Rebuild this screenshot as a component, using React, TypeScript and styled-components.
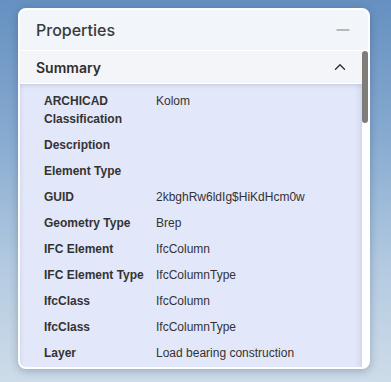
import React, { useState } from 'react';
import styled, { createGlobalStyle } from 'styled-components';

const GlobalStyle = createGlobalStyle`
  html, body {
    margin: 0;
    padding: 0;
    height: 100%;
  }
  body {
    background: linear-gradient(to bottom, #6590c0 0%, #86aad0 35%, #b3cae0 70%, #cedce9 100%);
    font-family: "Liberation Sans", Arial, sans-serif;
  }
`;

const Page = styled.div`
  padding: 8px 21px 13px 18px;
`;

const Panel = styled.div`
  width: 352px;
  height: 361px;
  box-sizing: border-box;
  display: flex;
  flex-direction: column;
  border: 2px solid #ffffff;
  border-radius: 8px;
  background: #ffffff;
  box-shadow: 0 2px 8px rgba(20, 40, 80, 0.28);
  overflow: hidden;
`;

const PanelHeader = styled.div`
  height: 40px;
  flex-shrink: 0;
  display: flex;
  align-items: center;
  justify-content: space-between;
  padding: 0 18px 0 16px;
  background: #f2f5f9;
  border-bottom: 1px solid #ffffff;
  border-radius: 6px 6px 0 0;
`;

const PanelTitle = styled.span`
  font-family: Inter, "Noto Sans", sans-serif;
  font-size: 16px;
  font-weight: 500;
  color: #3a3a3a;
`;

const IconButton = styled.button`
  border: none;
  background: transparent;
  padding: 0;
  display: flex;
  align-items: center;
  justify-content: center;
  cursor: pointer;
`;

const ScrollArea = styled.div`
  flex: 1;
  min-height: 0;
  display: flex;
`;

const ScrollContent = styled.div`
  flex: 1;
  min-width: 0;
  overflow: hidden;
`;

const ScrollTrack = styled.div`
  width: 6px;
  flex-shrink: 0;
  background: #ffffff;
`;

const ScrollThumb = styled.div`
  width: 6px;
  border-radius: 3px;
  background: #7f7d7a;
`;

const SectionHeader = styled.div`
  height: 32px;
  display: flex;
  align-items: center;
  justify-content: space-between;
  padding: 0 16px 0 16px;
  background: #f3f5f8;
  border-bottom: 1px solid #ffffff;
  cursor: pointer;
`;

const SectionTitle = styled.span`
  font-family: Inter, "Noto Sans", sans-serif;
  font-size: 14px;
  font-weight: 600;
  color: #2e2e2e;
`;

const SectionBody = styled.div`
  padding: 4px 0 6px;
  min-height: 100%;
  background: #e3e7fa;
  box-shadow: inset 0 4px 5px -3px rgba(60, 70, 120, 0.18),
    inset -6px 0 6px -4px rgba(60, 70, 120, 0.12),
    inset 4px 0 4px -3px rgba(60, 70, 120, 0.08);
`;

const Row = styled.div`
  display: grid;
  grid-template-columns: 112px 1fr;
  padding: 4px 12px 4px 24px;
  font-size: 12px;
  line-height: 18px;
  color: #333333;
`;

const Label = styled.div`
  font-weight: 700;
  padding-right: 8px;
`;

const Value = styled.div`
  word-break: break-all;
`;

type Prop = [string, string];

const summary: Prop[] = [
  ['ARCHICAD Classification', 'Kolom'],
  ['Description', ''],
  ['Element Type', ''],
  ['GUID', '2kbghRw6ldIg$HiKdHcm0w'],
  ['Geometry Type', 'Brep'],
  ['IFC Element', 'IfcColumn'],
  ['IFC Element Type', 'IfcColumnType'],
  ['IfcClass', 'IfcColumn'],
  ['IfcClass', 'IfcColumnType'],
  ['Layer', 'Load bearing construction'],
];

const Minus = () => (
  <svg width="14" height="4" viewBox="0 0 14 4">
    <line x1="0.5" y1="2" x2="13.5" y2="2" stroke="#a3a3a3" strokeWidth="1.6" />
  </svg>
);

const Chevron = ({ open }: { open: boolean }) => (
  <svg width="12" height="8" viewBox="0 0 12 8">
    <path
      d={open ? 'M1.5 6.2 L6 1.8 L10.5 6.2' : 'M1.5 1.8 L6 6.2 L10.5 1.8'}
      fill="none"
      stroke="#333333"
      strokeWidth="1.4"
      strokeLinecap="round"
      strokeLinejoin="round"
    />
  </svg>
);

const Section: React.FC<{ title: string; rows: Prop[] }> = ({ title, rows }) => {
  const [open, setOpen] = useState(true);
  return (
    <div>
      <SectionHeader onClick={() => setOpen(!open)}>
        <SectionTitle>{title}</SectionTitle>
        <Chevron open={open} />
      </SectionHeader>
      {open && (
        <SectionBody>
          {rows.map(([label, value], i) => (
            <Row key={i}>
              <Label>{label}</Label>
              <Value>{value}</Value>
            </Row>
          ))}
        </SectionBody>
      )}
    </div>
  );
};

export default function App() {
  return (
    <>
      <GlobalStyle />
      <Page>
        <Panel>
          <PanelHeader>
            <PanelTitle>Properties</PanelTitle>
            <IconButton type="button">
              <Minus />
            </IconButton>
          </PanelHeader>
          <ScrollArea>
            <ScrollContent>
              <Section title="Summary" rows={summary} />
            </ScrollContent>
            <ScrollTrack>
              <ScrollThumb style={{ height: 72 }} />
            </ScrollTrack>
          </ScrollArea>
        </Panel>
      </Page>
    </>
  );
}
